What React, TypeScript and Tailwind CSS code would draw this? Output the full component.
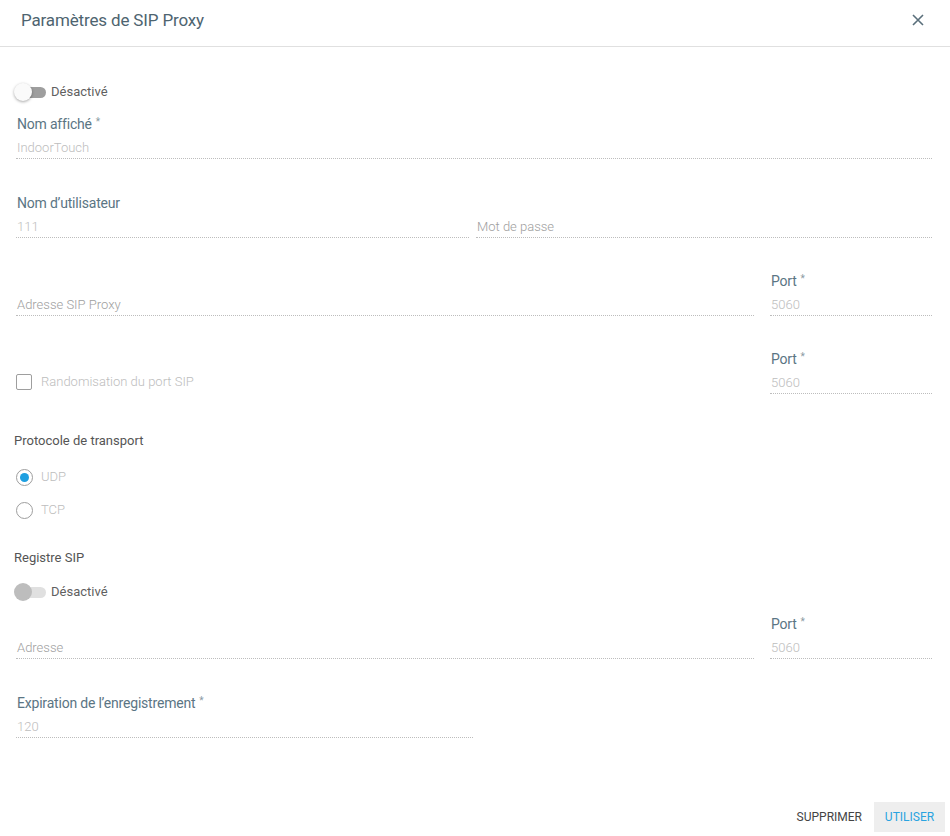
import React from "react";

const font = { fontFamily: "Roboto, 'Noto Sans', sans-serif" };

function Toggle({ disabled }: { disabled?: boolean }) {
  return (
    <div className="flex items-center h-[20px]">
      <div className="relative w-[32px] h-[20px] ml-[12px]">
        <div
          className={
            "absolute left-[2px] top-[5px] w-[30px] h-[11px] rounded-full " +
            (disabled ? "bg-[#e0e0e0]" : "bg-[#9e9e9e]")
          }
        />
        <div
          className={
            "absolute left-0 top-[1px] w-[18px] h-[18px] rounded-full " +
            (disabled
              ? "bg-[#bdbdbd]"
              : "bg-[#fafafa] shadow-[0_1px_3px_rgba(0,0,0,0.35)]")
          }
        />
      </div>
      <span className="ml-[5px] text-[13px] text-[#5f5f5f] font-normal">Désactivé</span>
    </div>
  );
}

function Label({ text, req }: { text: string; req?: boolean }) {
  return (
    <div className="h-[22px] leading-[22px] text-[14px] text-[#5b7584] pl-[1px] tracking-[-0.2px]">
      {text}
      {req && <span className="text-[10px] align-top ml-[4px] leading-[18px] text-[#8a9aa3]">*</span>}
    </div>
  );
}

function Input({ value, placeholder }: { value?: string; placeholder?: string }) {
  return (
    <div className="h-[24px] border-b border-dotted border-[#bdbdbd] text-[13px] font-light text-[#bdbdbd] pt-[3px] leading-[20px] pl-[1px]">
      {value ?? <span className="text-[#9e9e9e]">{placeholder}</span>}
    </div>
  );
}

function Radio({ checked, label }: { checked?: boolean; label: string }) {
  return (
    <div className="flex items-center h-[20px] pl-[14px]">
      <div className="w-[17px] h-[17px] rounded-full border-[1.5px] border-[#9e9e9e] flex items-center justify-center">
        {checked && <div className="w-[9px] h-[9px] rounded-full bg-[#1e9fe0]" />}
      </div>
      <span className="ml-[8px] text-[13px] font-light text-[#bdbdbd]">{label}</span>
    </div>
  );
}

export default function App() {
  return (
    <div className="w-[950px] h-[836px] bg-white flex flex-col" style={font}>
      <div className="h-[47px] border-b border-[#e0e0e0] flex items-start justify-between pl-[21px] pr-[26px] shrink-0">
        <div className="mt-[8px] text-[17px] text-[#4e6470] leading-[24px] tracking-[-0.15px]">
          Paramètres de SIP Proxy
        </div>
        <svg className="mt-[14px]" width="12" height="12" viewBox="0 0 12 12">
          <path d="M1 1L11 11M11 1L1 11" stroke="#5a6f7b" strokeWidth="1.6" />
        </svg>
      </div>

      <div className="pl-[2px] pr-[18px]">
        <div className="mt-[35px]">
          <Toggle />
        </div>

        <div className="mt-[11px] pl-[14px]">
          <Label text="Nom affiché" req />
          <Input value="IndoorTouch" />
        </div>

        <div className="mt-[33px] pl-[14px] grid grid-cols-[453px_1fr] gap-x-[7px]">
          <div>
            <Label text="Nom d’utilisateur" />
            <Input value="111" />
          </div>
          <div>
            <div className="h-[22px]" />
            <Input placeholder="Mot de passe" />
          </div>
        </div>

        <div className="mt-[32px] pl-[14px] flex gap-[16px]">
          <div className="flex-1">
            <div className="h-[22px]" />
            <Input placeholder="Adresse SIP Proxy" />
          </div>
          <div className="w-[162px]">
            <Label text="Port" req />
            <Input value="5060" />
          </div>
        </div>

        <div className="mt-[32px] pl-[14px] flex gap-[16px]">
          <div className="flex-1">
            <div className="h-[22px]" />
            <div className="h-[24px] flex items-center">
              <div className="w-[16px] h-[16px] border-[1.5px] border-[#9e9e9e] rounded-[2px]" />
              <span className="ml-[9px] text-[13px] font-light text-[#bdbdbd]">
                Randomisation du port SIP
              </span>
            </div>
          </div>
          <div className="w-[162px]">
            <Label text="Port" req />
            <Input value="5060" />
          </div>
        </div>

        <div className="mt-[37px] pl-[12px] h-[20px] leading-[20px] text-[13px] text-[#555]">
          Protocole de transport
        </div>
        <div className="mt-[16px]">
          <Radio checked label="UDP" />
        </div>
        <div className="mt-[13px]">
          <Radio label="TCP" />
        </div>

        <div className="mt-[28px] pl-[12px] h-[20px] leading-[20px] text-[13px] text-[#555]">
          Registre SIP
        </div>
        <div className="mt-[14px]">
          <Toggle disabled />
        </div>

        <div className="mt-[11px] pl-[14px] flex gap-[16px]">
          <div className="flex-1">
            <div className="h-[22px]" />
            <Input placeholder="Adresse" />
          </div>
          <div className="w-[162px]">
            <Label text="Port" req />
            <Input value="5060" />
          </div>
        </div>

        <div className="mt-[33px] pl-[14px] w-[471px]">
          <Label text="Expiration de l’enregistrement" req />
          <Input value="120" />
        </div>
      </div>

      <div className="mt-[64px] flex justify-end items-center pr-[5px] gap-[12px]">
        <button className="h-[30px] px-0 text-[12px] text-[#444] uppercase">Supprimer</button>
        <button className="h-[30px] w-[71px] bg-[#eeeeee] text-[12px] text-[#29a3e0] uppercase">
          Utiliser
        </button>
      </div>
    </div>
  );
}
